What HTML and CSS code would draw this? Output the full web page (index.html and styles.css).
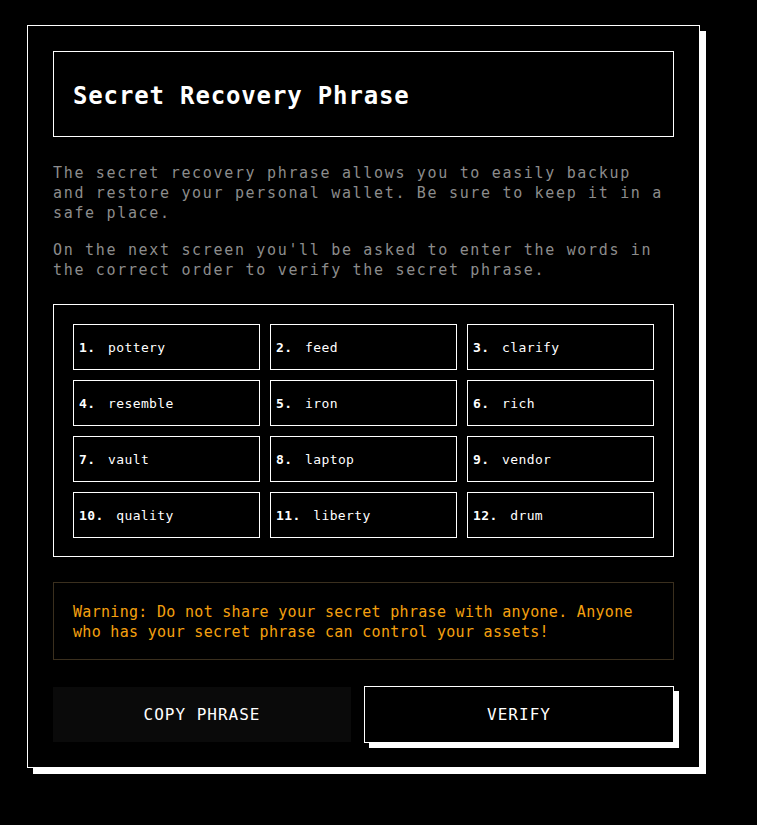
FILE: index.html
```html
<!DOCTYPE html>
<html lang="en">
<head>
<meta charset="utf-8">
<title>Secret Recovery Phrase</title>
<link rel="stylesheet" href="styles.css">
</head>
<body>
<main class="card">
  <header class="title-box">
    <h1 class="title">Secret Recovery Phrase</h1>
  </header>
  <section class="intro">
    <p class="intro-text">The secret recovery phrase allows you to easily backup and restore your personal wallet. Be sure to keep it in a safe place.</p>
    <p class="intro-text">On the next screen you'll be asked to enter the words in the correct order to verify the secret phrase.</p>
  </section>
  <section class="words">
    <div class="word"><span class="num">1.</span><span class="w">pottery</span></div>
    <div class="word"><span class="num">2.</span><span class="w">feed</span></div>
    <div class="word"><span class="num">3.</span><span class="w">clarify</span></div>
    <div class="word"><span class="num">4.</span><span class="w">resemble</span></div>
    <div class="word"><span class="num">5.</span><span class="w">iron</span></div>
    <div class="word"><span class="num">6.</span><span class="w">rich</span></div>
    <div class="word"><span class="num">7.</span><span class="w">vault</span></div>
    <div class="word"><span class="num">8.</span><span class="w">laptop</span></div>
    <div class="word"><span class="num">9.</span><span class="w">vendor</span></div>
    <div class="word"><span class="num">10.</span><span class="w">quality</span></div>
    <div class="word"><span class="num">11.</span><span class="w">liberty</span></div>
    <div class="word"><span class="num">12.</span><span class="w">drum</span></div>
  </section>
  <section class="warning">
    <p class="warning-text">Warning: Do not share your secret phrase with anyone. Anyone who has your secret phrase can control your assets!</p>
  </section>
  <div class="actions">
    <button class="btn btn-copy" type="button">COPY PHRASE</button>
    <button class="btn btn-verify" type="button">VERIFY</button>
  </div>
</main>
</body>
</html>
```

FILE: styles.css
```css
* { box-sizing: border-box; }

html, body {
  background: #000;
}

body {
  margin: 0;
  padding: 25px 0 40px 27px;
  font-family: "DejaVu Sans Mono", "Liberation Mono", monospace;
  color: #fff;
}

.card {
  width: 673px;
  border: 1px solid #fff;
  box-shadow: 6px 6px 0 #fff;
  padding: 25px 25px 24px;
  display: flex;
  flex-direction: column;
  gap: 25px;
  background: #000;
}

.title-box {
  border: 1px solid #fff;
  padding: 26px 19px 22px;
}

.title {
  margin: 0;
  font-size: 24px;
  line-height: 36px;
  font-weight: bold;
  letter-spacing: 0.85px;
  color: #fff;
}

.intro {
  margin-top: 1px;
  margin-bottom: -1px;
  max-width: 616px;
}

.intro-text {
  margin: 0 0 17px;
  font-size: 15px;
  line-height: 20px;
  letter-spacing: 1.67px;
  color: #8c8c8c;
}

.intro-text:last-child { margin-bottom: 0; }

.words {
  border: 1px solid #fff;
  padding: 19px 19px 18px;
  display: grid;
  grid-template-columns: repeat(3, 1fr);
  gap: 10px;
}

.word {
  height: 46px;
  border: 1px solid #fff;
  padding: 0 5px;
  display: flex;
  align-items: center;
  font-size: 13px;
  letter-spacing: 0.4px;
  color: #fff;
}

.num {
  font-weight: bold;
  margin-right: 12.5px;
}

.warning {
  border: 1px solid #3a2f1e;
  padding: 19px 19px 17px;
}

.warning-text {
  margin: 0;
  font-size: 15px;
  line-height: 20px;
  letter-spacing: 0.3px;
  color: #f5a00f;
}

.actions {
  margin-top: 1px;
  display: flex;
  align-items: center;
  gap: 13px;
}

.btn {
  font-family: "DejaVu Sans Mono", "Liberation Mono", monospace;
  font-size: 16px;
  letter-spacing: 1px;
  color: #fff;
  cursor: pointer;
  display: flex;
  align-items: center;
  justify-content: center;
}

.btn-copy {
  flex: 0 0 298px;
  height: 55px;
  background: #0a0a0a;
  border: none;
}

.btn-verify {
  flex: 1;
  height: 57px;
  background: #000;
  border: 1px solid #fff;
  box-shadow: 5px 5px 0 #fff;
}
```
